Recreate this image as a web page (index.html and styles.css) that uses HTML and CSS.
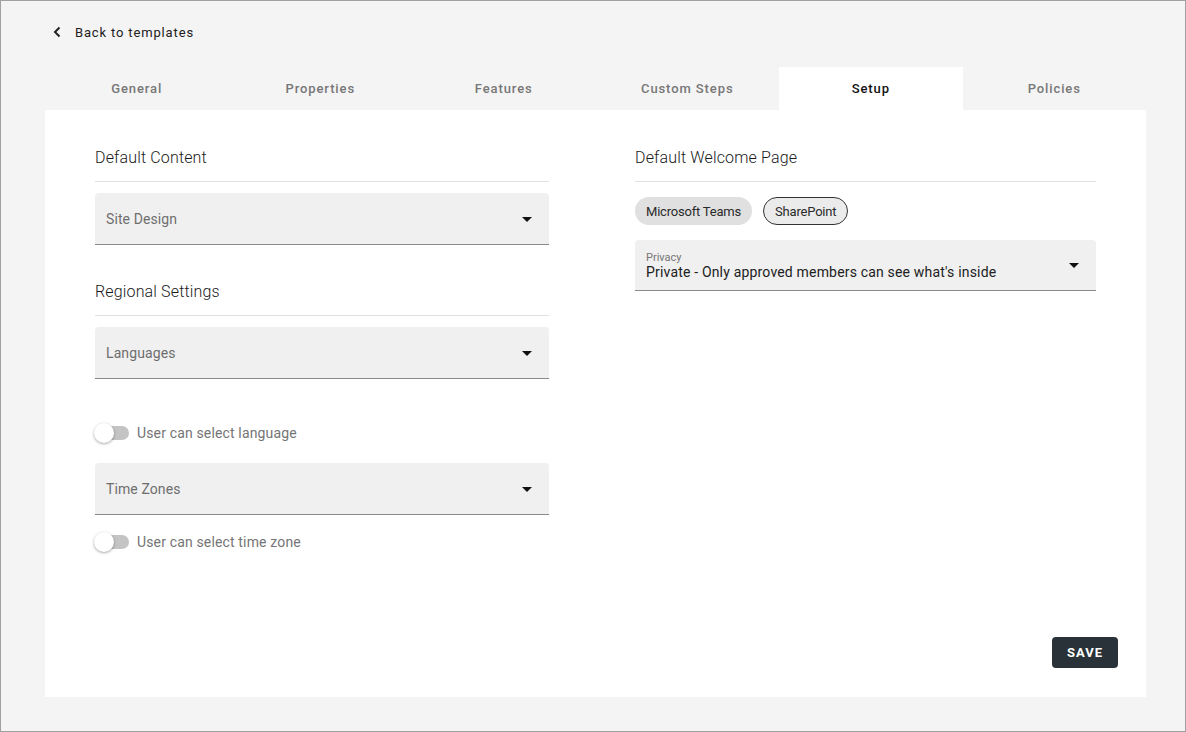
FILE: index.html
```html
<!DOCTYPE html>
<html>
<head>
<meta charset="utf-8">
<link rel="stylesheet" href="styles.css">
</head>
<body>
<div class="frame">
  <a class="back" href="#">
    <svg class="back-icon" width="8" height="12" viewBox="0 0 8 12"><path d="M6.5 1.5 L2 6 L6.5 10.5" fill="none" stroke="#212121" stroke-width="2"/></svg>
    <span>Back to templates</span>
  </a>
  <div class="tabs">
    <div class="tab">General</div>
    <div class="tab">Properties</div>
    <div class="tab">Features</div>
    <div class="tab">Custom Steps</div>
    <div class="tab active">Setup</div>
    <div class="tab">Policies</div>
  </div>
  <div class="card">
    <div class="cols">
      <div class="col">
        <div class="heading">Default Content</div>
        <div class="select"><span class="placeholder">Site Design</span><span class="arrow"></span></div>
        <div class="heading second">Regional Settings</div>
        <div class="select"><span class="placeholder">Languages</span><span class="arrow"></span></div>
        <div class="toggle-row first-toggle"><span class="toggle"><span class="knob"></span></span><span class="toggle-label">User can select language</span></div>
        <div class="select tz"><span class="placeholder">Time Zones</span><span class="arrow"></span></div>
        <div class="toggle-row last-toggle"><span class="toggle"><span class="knob"></span></span><span class="toggle-label">User can select time zone</span></div>
      </div>
      <div class="col">
        <div class="heading">Default Welcome Page</div>
        <div class="chips">
          <span class="chip">Microsoft Teams</span>
          <span class="chip selected">SharePoint</span>
        </div>
        <div class="select filled">
          <div class="value-wrap">
            <span class="small-label">Privacy</span>
            <span class="value">Private - Only approved members can see what's inside</span>
          </div>
          <span class="arrow"></span>
        </div>
      </div>
    </div>
    <div class="footer"><button class="save">SAVE</button></div>
  </div>
</div>
</body>
</html>
```
FILE: styles.css
```css
html, body {
  margin: 0;
  padding: 0;
}
body {
  font-family: Roboto, "Liberation Sans", Arial, sans-serif;
  background: #f4f4f4;
}
.frame {
  box-sizing: border-box;
  width: 1186px;
  height: 732px;
  border: 1px solid #a0a0a0;
  background: #f4f4f4;
  display: flex;
  flex-direction: column;
  padding: 0 39px 34px 44px;
}
.back {
  display: flex;
  align-items: center;
  height: 20px;
  margin-top: 21px;
  margin-left: 8px;
  text-decoration: none;
  color: #212121;
  font-size: 13px;
  letter-spacing: 0.85px;
}
.back-icon {
  margin-right: 14px;
}
.tabs {
  display: flex;
  margin-top: 25px;
  height: 43px;
}
.tab {
  flex: 1;
  display: flex;
  align-items: center;
  justify-content: center;
  font-size: 13px;
  font-weight: 500;
  letter-spacing: 0.9px;
  color: #777777;
}
.tab.active {
  background: #ffffff;
  color: #111111;
}
.card {
  flex: 1;
  background: #ffffff;
  display: flex;
  flex-direction: column;
  padding: 36px 28px 29px 50px;
}
.cols {
  display: grid;
  grid-template-columns: 454px 1fr;
  column-gap: 86px;
  margin-right: 22px;
}
.col {
  display: flex;
  flex-direction: column;
}
.heading {
  font-size: 16px;
  font-weight: 300;
  line-height: 24px;
  letter-spacing: 0.15px;
  color: #1a1a1a;
  padding-bottom: 11px;
  border-bottom: 1px solid #e0e0e0;
  margin-bottom: 11px;
}
.heading.second {
  margin-top: 35px;
}
.select {
  box-sizing: border-box;
  height: 52px;
  background: #f0f0f0;
  border-bottom: 1px solid #8a8a8a;
  border-radius: 4px 4px 0 0;
  display: flex;
  align-items: center;
  justify-content: space-between;
  padding: 0 17px 0 11px;
}
.placeholder {
  font-size: 14px;
  color: #6e6e6e;
  letter-spacing: 0.1px;
}
.arrow {
  width: 0;
  height: 0;
  border-left: 5px solid transparent;
  border-right: 5px solid transparent;
  border-top: 5px solid #111111;
  margin-top: 1px;
}
.toggle-row {
  display: flex;
  align-items: center;
  height: 20px;
}
.first-toggle {
  margin-top: 44px;
  margin-bottom: 20px;
}
.last-toggle {
  margin-top: 17px;
}
.toggle {
  position: relative;
  width: 34px;
  height: 14px;
  border-radius: 7px;
  background: #c4c4c4;
  margin-right: 8px;
}
.knob {
  position: absolute;
  left: -1px;
  top: -3px;
  width: 20px;
  height: 20px;
  border-radius: 50%;
  background: #ffffff;
  box-shadow: 0 1px 3px rgba(0,0,0,0.35);
}
.toggle-label {
  font-size: 14px;
  color: #757575;
  letter-spacing: 0.15px;
}
.chips {
  display: flex;
  gap: 11px;
  margin-top: 4px;
  margin-bottom: 15px;
}
.chip {
  box-sizing: border-box;
  height: 28px;
  display: inline-flex;
  align-items: center;
  padding: 0 11px;
  border-radius: 14px;
  background: #e0e0e0;
  font-size: 13px;
  letter-spacing: -0.2px;
  color: #2a2a2a;
}
.chip.selected {
  background: #ebebeb;
  border: 1px solid #333333;
}
.select.filled {
  height: 51px;
}
.value-wrap {
  display: flex;
  flex-direction: column;
  margin-top: 1px;
}
.small-label {
  font-size: 11px;
  line-height: 13px;
  color: #757575;
}
.value {
  font-size: 14px;
  line-height: 17px;
  color: #212121;
  letter-spacing: 0.18px;
}
.footer {
  margin-top: auto;
  display: flex;
  justify-content: flex-end;
}
.save {
  width: 66px;
  height: 31px;
  border: none;
  border-radius: 4px;
  background: #283238;
  color: #ffffff;
  font-family: Roboto, "Liberation Sans", Arial, sans-serif;
  font-size: 13px;
  font-weight: 700;
  letter-spacing: 1px;
}
```
